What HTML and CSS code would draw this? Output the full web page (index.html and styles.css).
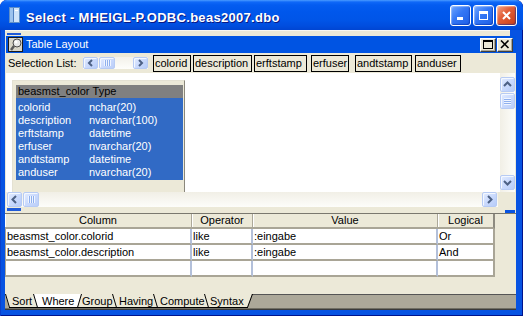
FILE: index.html
```html
<!DOCTYPE html>
<html>
<head>
<meta charset="utf-8">
<title>Select</title>
<link rel="stylesheet" href="styles.css">
</head>
<body>
<div class="win">
  <div class="titlebar">
    <svg class="appicon" width="13" height="16" viewBox="0 0 13 16">
      <rect x="1.5" y="0.5" width="10" height="15" fill="#CFE4FA" stroke="#5F8FC8"/>
      <rect x="2" y="1" width="3" height="14" fill="#9CC3EE"/>
      <line x1="5.5" y1="1" x2="5.5" y2="15" stroke="#4F7FBF"/>
      <rect x="7" y="3" width="3" height="1" fill="#fff"/>
    </svg>
    <span class="title">Select - MHEIGL-P.ODBC.beas2007.dbo</span>
    <div class="capbtns">
      <span class="cb"><svg width="13" height="13" viewBox="0 0 13 13"><rect x="3" y="8" width="6" height="3" fill="#fff"/></svg></span>
      <span class="cb"><svg width="13" height="13" viewBox="0 0 13 13"><rect x="2.5" y="2.5" width="8" height="8" fill="none" stroke="#fff"/><rect x="2" y="2" width="9" height="3" fill="#fff"/></svg></span>
      <span class="cb close"><svg width="13" height="13" viewBox="0 0 13 13"><path d="M3 3 L10 10 M10 3 L3 10" stroke="#fff" stroke-width="2"/></svg></span>
    </div>
  </div>

  <div class="client">
    <div class="sliver top"><span class="sl-left"></span><span class="sl-right"></span></div>

    <div class="child">
      <div class="childbar">
        <svg class="childicon" width="15" height="15" viewBox="0 0 15 15">
          <rect x="0.5" y="0.5" width="14" height="14" fill="#D8D5C8" stroke="#1A1A1A"/>
          <circle cx="9" cy="6" r="4" fill="#E8E8E8" stroke="#4A4A4A"/>
          <circle cx="8" cy="5" r="1.5" fill="#fff"/>
          <path d="M6 9 L3 13" stroke="#5A5A5A" stroke-width="2.5"/>
        </svg>
        <span class="childtitle">Table Layout</span>
        <div class="mbtns">
          <span class="mb"><svg width="10" height="9" viewBox="0 0 10 9"><rect x="0.5" y="0.5" width="9" height="8" fill="none" stroke="#000"/><rect x="0" y="0" width="10" height="2" fill="#000"/></svg></span>
          <span class="mb"><svg width="10" height="9" viewBox="0 0 10 9"><path d="M1 0.5 L8.5 8 M8.5 0.5 L1 8" stroke="#000" stroke-width="1.6"/></svg></span>
        </div>
      </div>

      <div class="sellist">
        <span class="sel-label">Selection List:</span>
        <div class="mini-scroll">
          <span class="sb small"><svg width="13" height="10" viewBox="0 0 13 10"><path d="M8 2 L5 5 L8 8" stroke="#4D6185" stroke-width="2" fill="none"/></svg></span>
          <span class="thumb hthumb small"><i></i></span>
          <span class="track"></span>
          <span class="sb small"><svg width="13" height="10" viewBox="0 0 13 10"><path d="M5 2 L8 5 L5 8" stroke="#4D6185" stroke-width="2" fill="none"/></svg></span>
        </div>
        <div class="colboxes">
          <span class="colbox">colorid</span>
          <span class="colbox">description</span>
          <span class="colbox">erftstamp</span>
          <span class="colbox">erfuser</span>
          <span class="colbox">andtstamp</span>
          <span class="colbox">anduser</span>
        </div>
      </div>

      <div class="canvaswrap">
        <div class="canvas">
          <div class="tblnode">
            <div class="tblhead"><span class="hname">beasmst_color</span><span>Type</span></div>
            <div class="tblrows">
              <div class="trow"><span>colorid</span><span>nchar(20)</span></div>
              <div class="trow"><span>description</span><span>nvarchar(100)</span></div>
              <div class="trow"><span>erftstamp</span><span>datetime</span></div>
              <div class="trow"><span>erfuser</span><span>nvarchar(20)</span></div>
              <div class="trow"><span>andtstamp</span><span>datetime</span></div>
              <div class="trow"><span>anduser</span><span>nvarchar(20)</span></div>
            </div>
          </div>
        </div>
        <div class="vscroll">
          <span class="sb"><svg width="13" height="13" viewBox="0 0 13 13"><path d="M3 8 L6.5 4.5 L10 8" stroke="#4D6185" stroke-width="2" fill="none"/></svg></span>
          <span class="thumb vthumb"><i></i></span>
          <span class="track"></span>
          <span class="sb"><svg width="13" height="13" viewBox="0 0 13 13"><path d="M3 5 L6.5 8.5 L10 5" stroke="#4D6185" stroke-width="2" fill="none"/></svg></span>
        </div>
      </div>

      <div class="hrow">
        <div class="hscroll">
          <span class="sb"><svg width="13" height="13" viewBox="0 0 13 13"><path d="M8 3 L4.5 6.5 L8 10" stroke="#4D6185" stroke-width="2" fill="none"/></svg></span>
          <span class="thumb hthumb"><i></i></span>
          <span class="track"></span>
          <span class="sb"><svg width="13" height="13" viewBox="0 0 13 13"><path d="M5 3 L8.5 6.5 L5 10" stroke="#4D6185" stroke-width="2" fill="none"/></svg></span>
        </div>
        <div class="corner"></div>
      </div>
    </div>

    <div class="sliver bottom"><span class="sl-left"></span><span class="sl-right"></span></div>

    <div class="gridarea">
      <div class="grid">
        <div class="gh">Column</div>
        <div class="gh">Operator</div>
        <div class="gh">Value</div>
        <div class="gh last">Logical</div>

        <div class="gc">beasmst_color.colorid</div>
        <div class="gc">like</div>
        <div class="gc">:eingabe</div>
        <div class="gc last">Or</div>

        <div class="gc">beasmst_color.description</div>
        <div class="gc">like</div>
        <div class="gc">:eingabe</div>
        <div class="gc last">And</div>

        <div class="gc"></div>
        <div class="gc"></div>
        <div class="gc"></div>
        <div class="gc last"></div>
      </div>
    </div>

    <div class="tabs">
      <svg width="511" height="16" viewBox="0 0 511 16">
        <rect x="0" y="0" width="511" height="16" fill="#ACA899"/>
        <line x1="242" y1="0.5" x2="511" y2="0.5" stroke="#555"/>
        <polygon points="0,0 4,13.5 242,13.5 247,0" fill="#ECE9D8"/>
        <polygon points="28,0 32,13.5 72,13.5 76,0" fill="#fff"/>
        <g stroke="#000" fill="none" stroke-width="1">
          <line x1="0.5" y1="0" x2="4.5" y2="13.5"/>
          <line x1="28.5" y1="0" x2="32.5" y2="13.5"/>
          <line x1="72.5" y1="13.5" x2="76.5" y2="0"/>
          <line x1="107.5" y1="0" x2="111.5" y2="13.5"/>
          <line x1="148.5" y1="0" x2="152.5" y2="13.5"/>
          <line x1="199.5" y1="0" x2="203.5" y2="13.5"/>
          <line x1="242.5" y1="13.5" x2="247.5" y2="0"/>
          <line x1="4" y1="13.5" x2="243" y2="13.5"/>
        </g>
        <line x1="0" y1="14.5" x2="511" y2="14.5" stroke="#716F64"/>
        <line x1="0" y1="15.5" x2="511" y2="15.5" stroke="#3A3A3A"/>
        <g class="tabtext">
          <text x="7" y="11">Sort</text>
          <text x="37" y="11">Where</text>
          <text x="77" y="11">Group</text>
          <text x="114" y="11">Having</text>
          <text x="155" y="11">Compute</text>
          <text x="205" y="11">Syntax</text>
        </g>
      </svg>
    </div>
  </div>
</div>
</body>
</html>
```

FILE: styles.css
```css
* { box-sizing: border-box; }

body {
  margin: 0;
  background: #fff;
  font-family: "Liberation Sans", Arial, sans-serif;
  font-size: 11px;
  color: #000;
}

.win {
  width: 523px;
  height: 316px;
  display: flex;
  flex-direction: column;
  background: #0753E2;
  border-radius: 7px 7px 0 0;
  overflow: hidden;
  box-shadow: inset 1px 0 #0A3FCC, inset -1px 0 #00138C, inset 0 -1px #00138C;
}

/* ---------- title bar ---------- */
.titlebar {
  height: 30px;
  flex: none;
  display: flex;
  align-items: flex-start;
  padding: 0 6px 0 8px;
  border-radius: 7px 7px 0 0;
  background: linear-gradient(180deg, #4A9BFF 0, #0F68F8 2px, #045CF0 5px, #0057EC 12px, #0055E8 20px, #004DDE 26px, #0045D2 30px);
}

.appicon { margin-top: 7px; flex: none; }

.title {
  margin: 10px 0 0 5px;
  line-height: 15px;
  color: #fff;
  font-weight: bold;
  font-size: 13px;
  letter-spacing: 0.3px;
  text-shadow: 1px 1px #0A1883;
  white-space: nowrap;
}

.capbtns {
  margin: 5px 0 0 auto;
  display: flex;
  gap: 2px;
}

.cb {
  width: 21px;
  height: 21px;
  border: 1px solid #fff;
  border-radius: 3px;
  display: flex;
  align-items: center;
  justify-content: center;
  background: linear-gradient(135deg, #6FA6FF 0%, #3477F5 45%, #1E5FE6 100%);
  box-shadow: inset -1px -1px 1px rgba(0, 40, 160, .5), inset 1px 1px 1px rgba(255, 255, 255, .35);
}

.cb.close {
  background: linear-gradient(135deg, #F4A487 0%, #E3603A 40%, #C83C16 100%);
}

/* ---------- client ---------- */
.client {
  flex: 1;
  min-height: 0;
  display: flex;
  flex-direction: column;
  margin: 0 7px 6px 5px;
  background: #ECE9D8;
}

.sliver {
  flex: none;
  display: flex;
  justify-content: space-between;
}

.sliver.top {
  height: 6px;
  border-top: 1px solid #F8F7F2;
}

.sliver.top .sl-left {
  width: 14px;
  height: 2px;
  margin: 2px 0 0 2px;
  background: #1F5AD8;
}

.sliver.top .sl-right {
  width: 6px;
  background: #0753E2;
  margin-top: -1px;
}

.sliver.bottom {
  height: 7px;
  border-bottom: 1px solid #7A786E;
}

.sliver.bottom .sl-left {
  width: 14px;
  height: 3px;
  margin: 1px 0 0 2px;
  background: #1F5AD8;
}

.sliver.bottom .sl-right {
  width: 10px;
  height: 3px;
  align-self: flex-end;
  margin-right: 1px;
  background: #0753E2;
}

.child {
  flex: none;
  margin-left: 1px;
  display: flex;
  flex-direction: column;
}

/* inner title bar */
.childbar {
  height: 17px;
  display: flex;
  align-items: center;
  padding: 0 3px 0 2px;
  background: #0054E3;
}

.childicon { flex: none; }

.childtitle {
  margin-left: 3px;
  color: #fff;
  font-size: 11px;
  line-height: 13px;
  white-space: nowrap;
}

.mbtns {
  margin-left: auto;
  display: flex;
  gap: 1px;
}

.mb {
  width: 16px;
  height: 14px;
  flex: none;
  display: flex;
  align-items: center;
  justify-content: center;
  background: #ECE9D8;
  border: 1px solid;
  border-color: #fff #404040 #404040 #fff;
  box-shadow: inset -1px -1px #ACA899;
}

/* selection list */
.sellist {
  height: 20px;
  display: flex;
  align-items: center;
  padding-left: 2px;
}

.sel-label { white-space: nowrap; flex: none; width: 75px; }

.mini-scroll {
  width: 65px;
  height: 12px;
  display: flex;
  background: linear-gradient(180deg, #F3F1EA, #FEFEFB);
}

.colboxes { display: flex; height: 17px; }

.colbox {
  height: 17px;
  border: 1px solid #000;
  padding-left: 1px;
  line-height: 15px;
  white-space: nowrap;
  overflow: hidden;
}

.colbox:nth-child(1) { width: 38px; margin-left: 5px; }
.colbox:nth-child(2) { width: 59px; margin-left: 2px; }
.colbox:nth-child(3) { width: 53px; margin-left: 2px; }
.colbox:nth-child(4) { width: 38px; margin-left: 4px; }
.colbox:nth-child(5) { width: 57px; margin-left: 6px; }
.colbox:nth-child(6) { width: 46px; margin-left: 3px; }

/* scroll parts */
.sb {
  flex: none;
  width: 15px;
  height: 15px;
  display: flex;
  align-items: center;
  justify-content: center;
  border: 1px solid #B7CBF4;
  border-radius: 2px;
  background: linear-gradient(135deg, #E3ECFF 0%, #CADAFD 50%, #B7CCF8 100%);
  box-shadow: inset 1px 1px #F4F8FF;
}

.sb.small { height: 12px; }

.thumb {
  flex: none;
  display: flex;
  align-items: center;
  justify-content: center;
  border: 1px solid #B7CBF4;
  border-radius: 2px;
  background: linear-gradient(135deg, #E3ECFF 0%, #CADAFD 50%, #BBCEF8 100%);
  box-shadow: inset 1px 1px #F4F8FF;
}

.hthumb { width: 16px; height: 15px; margin-left: 1px; }
.hthumb.small { height: 12px; }
.hthumb i {
  width: 7px;
  height: 7px;
  background: repeating-linear-gradient(90deg, #F0F5FF 0 1px, #8FB0EE 1px 2px);
}
.hthumb.small i { height: 6px; }

.vthumb { width: 15px; height: 16px; margin-top: 1px; }
.vthumb i {
  width: 7px;
  height: 7px;
  background: repeating-linear-gradient(180deg, #F0F5FF 0 1px, #8FB0EE 1px 2px);
}

.track { flex: 1; }

/* canvas */
.canvaswrap {
  height: 119px;
  display: flex;
  padding-right: 1px;
}

.canvas {
  flex: 1;
  position: relative;
  overflow: hidden;
  background: #fff;
}

.tblnode {
  position: absolute;
  left: 6px;
  top: 7px;
  width: 173px;
  height: 115px;
  padding: 4px 1px 0 3px;
  background: #ECE9D8;
  border: 1px solid #E4E1D2;
  border-right-color: #8A877C;
}

.tblhead {
  height: 13px;
  line-height: 13px;
  background: #808080;
  display: flex;
  padding-left: 2px;
  white-space: nowrap;
}

.hname { min-width: 71px; padding-right: 3px; }

.tblrows {
  background: #316AC5;
  color: #fff;
  padding: 3px 0 1px 2px;
}

.trow {
  height: 13px;
  line-height: 13px;
  display: grid;
  grid-template-columns: 71px 1fr;
  white-space: nowrap;
}

.vscroll {
  width: 15px;
  display: flex;
  flex-direction: column;
  padding: 4px 0 2px;
  background: linear-gradient(90deg, #F1EFE6, #FDFDFA);
}

.hrow { height: 15px; display: flex; }

.hscroll {
  width: 492px;
  display: flex;
  padding-left: 1px;
  padding-right: 1px;
  background: linear-gradient(180deg, #F1EFE6, #FDFDFA);
}

.corner { flex: 1; }

/* where grid */
.gridarea { flex: 1; min-height: 0; }

.grid {
  display: grid;
  grid-template-columns: 187px 61px 185px 57px;
  width: 490px;
}

.gh {
  height: 15px;
  line-height: 13px;
  text-align: center;
  border-bottom: 2px solid #A9A596;
  border-right: 1px solid #ACA899;
  box-shadow: inset 1px 0 #fff;
}

.gh.last { border-right: 2px solid #8E8B80; }

.gc {
  height: 16px;
  line-height: 14px;
  background: #fff;
  border-bottom: 2px solid #A9A596;
  border-right: 2px solid #B3C0DA;
  padding-left: 1px;
  white-space: nowrap;
  overflow: hidden;
}

.grid > .gc:nth-child(4n+1) { border-left: 1px solid #A9A596; }
.gc.last { border-right-color: #A9A596; }

/* tabs */
.tabs { height: 16px; flex: none; display: flex; }

.tabtext text {
  font-family: "Liberation Sans", Arial, sans-serif;
  font-size: 11px;
  fill: #000;
}
```
